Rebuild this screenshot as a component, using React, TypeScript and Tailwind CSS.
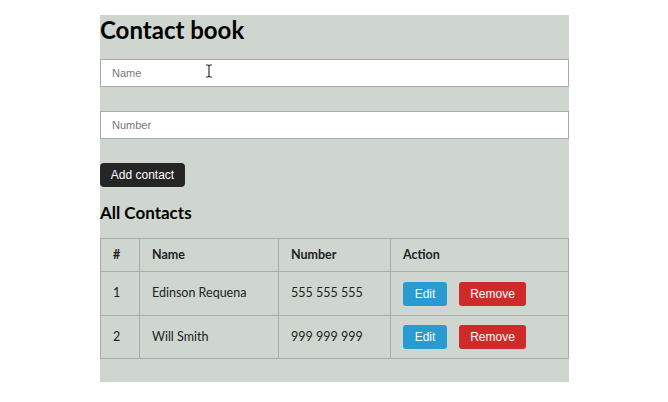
import React from "react";

const contacts = [
  { id: 1, name: "Edinson Requena", number: "555 555 555" },
  { id: 2, name: "Will Smith", number: "999 999 999" },
];

export default function App() {
  return (
    <div className="w-[668px] h-[402px] bg-white pt-[15px] pl-[100px]" style={{ fontFamily: 'Lato, sans-serif' }}>
      <div className="w-[469px] h-[367px] bg-[#ced6cf] relative">
        <h1 className="text-[24px] font-bold leading-[28px] text-black pt-[1px]">Contact book</h1>
        <input
          placeholder="Name"
          className="mt-[15px] block w-full h-[28px] bg-white border border-[#a8aca8] px-[11px] text-[11px] placeholder:text-[#777] outline-none"
          style={{ fontFamily: '"Liberation Sans", sans-serif' }}
        />
        <svg className="absolute left-[105px] top-[49px]" width="8" height="14" viewBox="0 0 8 14">
          <path d="M1 1h2l1 1 1-1h2M4 2v10M1 13h2l1-1 1 1h2" stroke="#333" strokeWidth="1.2" fill="none" />
        </svg>
        <input
          placeholder="Number"
          className="mt-[24px] block w-full h-[28px] bg-white border border-[#a8aca8] px-[11px] text-[11px] placeholder:text-[#777] outline-none"
          style={{ fontFamily: '"Liberation Sans", sans-serif' }}
        />
        <button
          className="mt-[24px] block h-[24px] w-[85px] rounded-[4px] bg-[#252525] text-white text-[12px]"
          style={{ fontFamily: '"Liberation Sans", sans-serif' }}
        >
          Add contact
        </button>
        <h2 className="mt-[14px] text-[17px] font-bold leading-[24px] text-black">All Contacts</h2>
        <table className="mt-[13px] w-full border-collapse text-[12.5px] text-[#222]">
          <thead>
            <tr className="h-[33px] text-left font-bold">
              <th className="border border-[#a8aca8] w-[39px] pl-[12px]">#</th>
              <th className="border border-[#a8aca8] w-[139px] pl-[12px]">Name</th>
              <th className="border border-[#a8aca8] w-[112px] pl-[12px]">Number</th>
              <th className="border border-[#a8aca8] pl-[12px]">Action</th>
            </tr>
          </thead>
          <tbody>
            {contacts.map((c, i) => (
              <tr key={c.id} className={i === 0 ? "h-[44px]" : "h-[43px]"}>
                <td className="border border-[#a8aca8] pl-[12px]">{c.id}</td>
                <td className="border border-[#a8aca8] pl-[12px]">{c.name}</td>
                <td className="border border-[#a8aca8] pl-[12px]">{c.number}</td>
                <td className="border border-[#a8aca8] pl-[12px]">
                  <div className="flex gap-[12px]" style={{ fontFamily: '"Liberation Sans", sans-serif' }}>
                    <button className="h-[24px] w-[44px] rounded-[3px] bg-[#2a9bd0] text-white text-[12px]">Edit</button>
                    <button className="h-[24px] w-[67px] rounded-[3px] bg-[#cf2a2a] text-white text-[12px]">Remove</button>
                  </div>
                </td>
              </tr>
            ))}
          </tbody>
        </table>
      </div>
    </div>
  );
}
